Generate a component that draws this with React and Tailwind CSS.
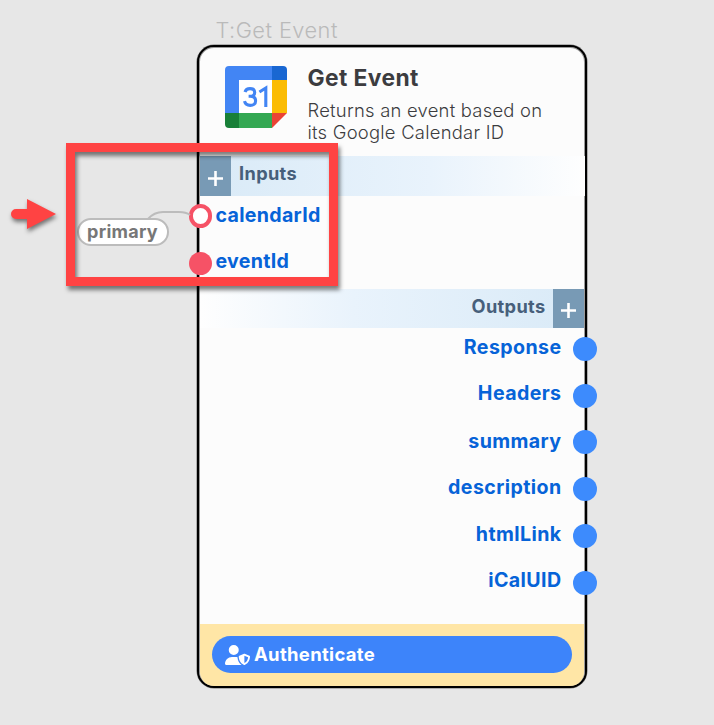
import { FaUserShield } from "react-icons/fa6";

const outputs = [
  { name: "Response", height: "h-[47px]", label: "" },
  { name: "Headers", height: "h-[46px]", label: "-mt-px" },
  { name: "summary", height: "h-[47px]", label: "mt-px" },
  { name: "description", height: "h-[47px]", label: "" },
  { name: "htmlLink", height: "h-[47px]", label: "" },
  { name: "iCalUID", height: "h-[47px]", label: "-mt-px" },
];

function CalendarLogo() {
  return (
    <svg className="mt-[19px] ml-[25.5px] h-[62px] w-[62px] shrink-0" viewBox="0 0 62 62">
      <path d="M4 0H47V14H14V47H0V4Q0 0 4 0Z" fill="#4285f4" />
      <path d="M47 0H58Q62 0 62 4V14H47Z" fill="#1967d2" />
      <path d="M47 14H62V47H47Z" fill="#fbbc04" />
      <path d="M14 47H47V62H14Z" fill="#34a853" />
      <path d="M0 47H14V62H4Q0 62 0 58Z" fill="#188038" />
      <path d="M47 47H62L47 62Z" fill="#ea4335" />
      <path d="M14 14H47V47H14Z" fill="#fff" />
      <path
        d="M20 26C20.8 23.5 22.7 22.6 25 22.6C27.9 22.6 29.7 24 29.7 26.4C29.7 28.8 27.9 30.3 25.1 30.3H23.6M25.1 30.3C28.4 30.3 30.6 32 30.6 34.9C30.6 37.8 28.2 39.4 25.2 39.4C22.3 39.4 20.2 38 19.5 35.2M34.4 26L40.8 22V41"
        fill="none"
        stroke="#4285f4"
        strokeWidth="3.1"
      />
    </svg>
  );
}

function AddButton() {
  return (
    <button className="flex w-[31px] shrink-0 items-center justify-center self-stretch bg-[#789ab5] pt-[4px]" aria-label="Add">
      <svg className="h-[15px] w-[15px]" viewBox="0 0 15 15" stroke="#fff" strokeWidth="2.6">
        <path d="M0 7.5H15M7.5 0V15" />
      </svg>
    </button>
  );
}

export default function App() {
  return (
    <main className="relative h-[725px] w-[714px] overflow-hidden bg-[#e7e7e7] font-['Inter',sans-serif] [font-optical-sizing:none]">
      <div className="absolute left-[215.5px] top-[17px] text-[21.8px] leading-[27px] font-[360] tracking-[0.45px] whitespace-nowrap text-[#bababa]">T:Get Event</div>

      <section className="absolute left-[197px] top-[45px] flex h-[643px] w-[390px] flex-col rounded-[17px] border-2 border-black bg-[#fcfcfc] shadow-[inset_0_0_0_1px_#9a9a9a,0_0_0_0.5px_#777]">
        <header className="flex h-[109px] shrink-0">
          <CalendarLogo />
          <div className="ml-[21px] pt-[16px] text-[#3c3c3f]">
            <h1 className="text-[22.8px] leading-[30px] font-bold tracking-[0.4px] whitespace-nowrap">Get Event</h1>
            <p className="mt-[6px] text-[18.4px] leading-[22px] font-[350] tracking-[0.25px] whitespace-nowrap">
              Returns an event based on
              <br />
              its Google Calendar ID
            </p>
          </div>
        </header>

        <div className="ml-px flex h-10 shrink-0 bg-linear-to-r from-[#d9eaf7] via-[#e9f3fc] via-60% to-[#fefefe]">
          <AddButton />
          <span className="ml-2 pt-[4px] text-[18.2px] leading-[26px] font-bold tracking-[0.35px] text-[#475f7b]">Inputs</span>
        </div>
        <ul className="h-[93px] shrink-0 text-[19.6px] leading-[26px] font-bold tracking-[0.3px] text-[#0663d8]">
          <li className="-ml-[10px] flex h-[47px] gap-1">
            <i className="mt-[8px] h-6 w-[23px] rounded-full border-[4px] border-[#f65266] bg-white" />
            <span className="-ml-[0.5px] pt-[6px]">calendarId</span>
          </li>
          <li className="-ml-[10px] flex h-[46px] gap-1">
            <i className="mt-[9px] h-[23px] w-[23px] rounded-full bg-[#f65266]" />
            <span className="-ml-[0.5px] pt-[5px]">eventId</span>
          </li>
        </ul>

        <div className="mr-px ml-px flex h-[39px] shrink-0 justify-end bg-linear-to-l from-[#d9eaf7] via-[#e9f3fc] via-60% to-[#fefefe]">
          <span className="mr-[7.5px] pt-[4px] text-[18.2px] leading-[26px] font-bold tracking-[0.35px] text-[#475f7b]">Outputs</span>
          <AddButton />
        </div>
        <ul className="h-[296px] shrink-0 pt-[6px] text-[19.6px] leading-[26px] font-bold tracking-[0.4px] text-[#0663d8]">
          {outputs.map(({ name, height, label }) => (
            <li key={name} className={"-mr-[12px] flex justify-end gap-[11.5px] " + height}>
              <span className={label}>{name}</span>
              <i className="mt-[3px] h-6 w-6 rounded-full bg-[#3d8bfd]" />
            </li>
          ))}
        </ul>

        <footer className="mx-px flex-1 rounded-b-[14px] bg-[#ffe6a6] px-3 pt-3">
          <button className="flex h-[37px] w-full items-center rounded-full bg-[#3d84fa] pl-[13px] text-[18.5px] font-bold tracking-[0.3px] text-white">
            <FaUserShield className="mr-[4px] h-5 w-[25px]" />
            Authenticate
          </button>
        </footer>
      </section>

      <svg className="absolute left-[140px] top-[205px]" width="54" height="20" fill="none" stroke="#bcbcbc" strokeWidth="2">
        <path d="M8 14Q14 7 23 7H39Q46 7 50 10" />
      </svg>
      <div className="absolute left-[76.5px] top-[218px] flex h-[28px] w-[92px] items-center justify-center rounded-full border-2 border-[#bcbcbc] bg-white text-[18px] leading-[26px] font-bold tracking-[0.25px] text-[#777]">
        primary
      </div>

      <svg className="absolute left-0 top-[190px] drop-shadow-[1px_3px_2px_rgba(0,0,0,0.5)]" width="66" height="50" fill="#ff4343">
        <path d="M16 19H27V9L56 24L27 39V29H16A5 5 0 0 1 16 19Z" />
      </svg>
      <div className="absolute left-[66px] top-[143px] h-[143px] w-[272px] border-[9px] border-[#ff4343] drop-shadow-[2px_4px_2px_rgba(0,0,0,0.5)]" />
    </main>
  );
}
